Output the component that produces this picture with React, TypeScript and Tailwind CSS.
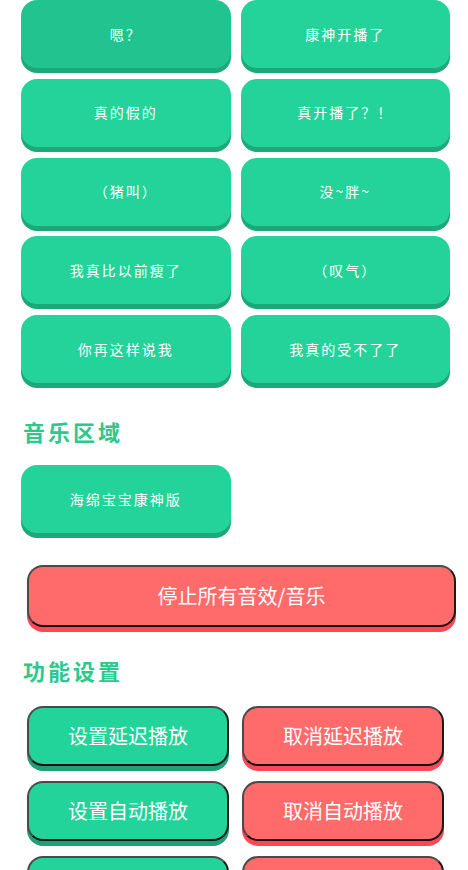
import React from 'react';

const SOUNDS = [
  '嗯？',
  '康神开播了',
  '真的假的',
  '真开播了？！',
  '（猪叫）',
  '没~胖~',
  '我真比以前瘦了',
  '（叹气）',
  '你再这样说我',
  '我真的受不了了',
];

// third row is below the fold, labels not visible
const SETTINGS = [
  ['设置延迟播放', '取消延迟播放'],
  ['设置自动播放', '取消自动播放'],
  ['', ''],
];

const FONT = { fontFamily: '"Noto Sans CJK SC", "Noto Sans", sans-serif' };

function SoundButton({ label, active }: { label: string; active?: boolean }) {
  return (
    <button
      className={
        'h-[68px] w-full rounded-[16px] text-[14px] tracking-[2px] text-white shadow-[0_5px_0_#1ca879] ' +
        (active ? 'bg-[#21c48f]' : 'bg-[#23d39a]')
      }
    >
      {label}
    </button>
  );
}

function Heading({ children }: { children: React.ReactNode }) {
  return (
    <h2 className="pl-[2px] text-[22px] font-bold leading-[32px] tracking-[3px] text-[#2bc98c]">
      {children}
    </h2>
  );
}

function ActionButton({ label, danger }: { label: string; danger?: boolean }) {
  return (
    <button
      className={
        'h-[60px] w-[202px] rounded-[16px] border-2 border-[#4a4a4a] border-b-[#111] border-r-[#1a1a1a] text-[20px] text-white ' +
        (danger ? 'bg-[#ff6b6b] shadow-[0_5px_0_#ff4757]' : 'bg-[#22d39a] shadow-[0_5px_0_#1e9f74]')
      }
    >
      {label}
    </button>
  );
}

export default function App() {
  return (
    <div className="h-[870px] w-[468px] overflow-hidden bg-white" style={FONT}>
      <div className="pl-[21px] pr-[18px]">
        <div className="grid grid-cols-2 gap-x-[10px] gap-y-[10.75px]">
          {SOUNDS.map((s, i) => (
            <SoundButton key={s} label={s} active={i === 0} />
          ))}
        </div>

        <div className="mt-[32px]">
          <Heading>音乐区域</Heading>
        </div>

        <div className="mt-[18px] grid grid-cols-2 gap-x-[10px]">
          <SoundButton label="海绵宝宝康神版" />
        </div>

        <button className="ml-[6px] mt-[32px] h-[62px] w-[429px] rounded-[16px] border-2 border-[#4a4a4a] border-b-[#111] border-r-[#1a1a1a] bg-[#ff6b6b] text-[20px] text-white shadow-[0_5px_0_#ff4757]">
          停止所有音效/音乐
        </button>

        <div className="mt-[27px]">
          <Heading>功能设置</Heading>
        </div>

        <div className="mt-[20px] flex flex-col gap-[15px] pl-[6px]">
          {SETTINGS.map(([a, b], i) => (
            <div key={i} className="flex gap-[13px]">
              <ActionButton label={a} />
              <ActionButton label={b} danger />
            </div>
          ))}
        </div>
      </div>
    </div>
  );
}
